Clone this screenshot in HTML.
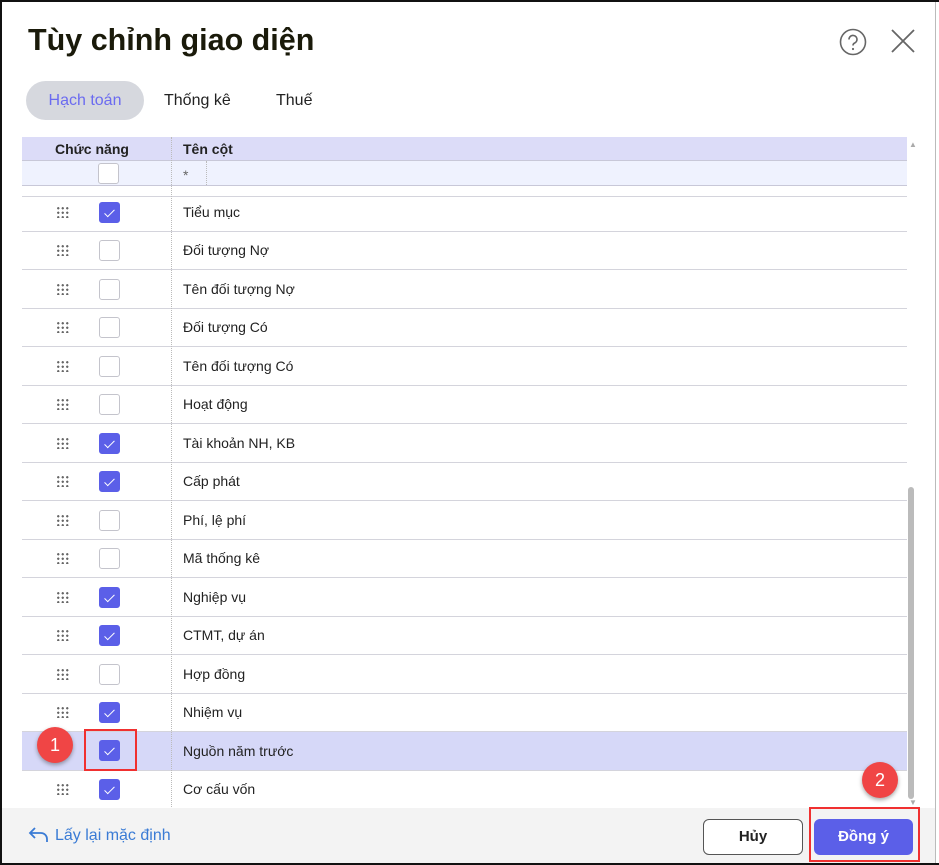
<!DOCTYPE html>
<html><head><meta charset="utf-8"><style>
*{box-sizing:border-box;margin:0;padding:0}
body{width:939px;height:865px;overflow:hidden;background:#fff;font-family:"Liberation Sans",Arial,sans-serif;position:relative}
.frame{position:absolute;left:0;top:0;width:939px;height:865px;border:2px solid #111;border-right:none}
.rline{position:absolute;left:935px;top:0;width:1px;height:865px;background:#bbb}
h1{position:absolute;left:28px;top:23px;font-size:30.5px;font-weight:bold;color:#1a1a0a}
.tab{position:absolute;top:81px;height:39px;line-height:39px;font-size:16px;color:#222}
.pill{left:26px;width:118px;background:#d6d8de;border-radius:20px;text-align:center;color:#6b6bf0}
.hdr{position:absolute;left:22px;top:137px;width:885px;height:24px;background:#dcdcf8;border-bottom:1px solid #c8c8d8}
.flt{position:absolute;left:22px;top:161px;width:885px;height:25px;background:#eff2fe;border-bottom:1px solid #c8c8d8}
.row{position:absolute;left:22px;width:885px;height:39px;border-bottom:1px solid #d4d4dc;font-size:14px;color:#222}
.row .t{position:absolute;left:161px;top:11px}
.cb{position:absolute;width:21px;height:21px;border:1px solid #c4c4cc;border-radius:3px;background:#fff}
.cb.on{background:#5b5fe8;border-color:#5b5fe8}
.cb.on::after{content:"";position:absolute;left:7px;top:4px;width:4px;height:9px;border:solid #fff;border-width:0 1.5px 1.5px 0;transform:rotate(45deg)}
.dots{position:absolute;left:34px;top:13px;width:14px;height:12px;background-image:radial-gradient(circle,#666 1px,transparent 1.3px);background-size:4.5px 4.5px}
.vdiv{position:absolute;left:171px;top:137px;width:0;height:672px;border-left:1px dotted #bbb}
.sel{background:#d6d8f8}
.foot{position:absolute;left:2px;top:808px;width:933px;height:57px;background:#f3f3f3}
.btn{position:absolute;top:819px;height:36px;border-radius:6px;font-size:15px;font-weight:bold;text-align:center;line-height:34px}
.badge{position:absolute;width:36px;height:36px;border-radius:50%;background:#f04545;color:#fff;font-size:18px;text-align:center;line-height:36px;box-shadow:0 2px 4px rgba(0,0,0,.35)}
.red{position:absolute;border:2px solid #f03030}
</style></head><body>
<h1>Tùy chỉnh giao diện</h1>
<svg style="position:absolute;left:838px;top:28px" width="30" height="30" viewBox="0 0 30 30"><circle cx="15" cy="14" r="12.5" fill="none" stroke="#666" stroke-width="1.6"/><path d="M11 11.5a4 4 0 1 1 5.5 3.6c-1 .5-1.5 1.2-1.5 2.4" fill="none" stroke="#666" stroke-width="1.6"/><circle cx="15" cy="21" r="1.1" fill="#666"/></svg>
<svg style="position:absolute;left:890px;top:28px" width="26" height="26" viewBox="0 0 26 26"><path d="M2 2L24 24M24 2L2 24" stroke="#666" stroke-width="1.8"/></svg>
<div class="tab pill">Hạch toán</div>
<div class="tab" style="left:164px">Thống kê</div>
<div class="tab" style="left:276px">Thuế</div>
<div class="hdr"><span style="position:absolute;left:33px;top:4px;font-size:14px;font-weight:bold;color:#222">Chức năng</span><span style="position:absolute;left:161px;top:4px;font-size:14px;font-weight:bold;color:#222">Tên cột</span></div>
<div class="flt"><div class="cb" style="left:76px;top:2px"></div><span style="position:absolute;left:161px;top:6px;color:#666;font-size:14px">*</span><div style="position:absolute;left:184px;top:0;height:24px;border-left:1px dotted #bbb"></div></div>
<div style="position:absolute;left:22px;top:196px;width:885px;border-top:1px solid #d4d4dc"></div>

<div class="row" style="top:193px"><div class="dots"></div><div class="cb on" style="left:77px;top:9px"></div><span class="t">Tiểu mục</span></div>
<div class="row" style="top:231px"><div class="dots"></div><div class="cb" style="left:77px;top:9px"></div><span class="t">Đối tượng Nợ</span></div>
<div class="row" style="top:270px"><div class="dots"></div><div class="cb" style="left:77px;top:9px"></div><span class="t">Tên đối tượng Nợ</span></div>
<div class="row" style="top:308px"><div class="dots"></div><div class="cb" style="left:77px;top:9px"></div><span class="t">Đối tượng Có</span></div>
<div class="row" style="top:347px"><div class="dots"></div><div class="cb" style="left:77px;top:9px"></div><span class="t">Tên đối tượng Có</span></div>
<div class="row" style="top:385px"><div class="dots"></div><div class="cb" style="left:77px;top:9px"></div><span class="t">Hoạt động</span></div>
<div class="row" style="top:424px"><div class="dots"></div><div class="cb on" style="left:77px;top:9px"></div><span class="t">Tài khoản NH, KB</span></div>
<div class="row" style="top:462px"><div class="dots"></div><div class="cb on" style="left:77px;top:9px"></div><span class="t">Cấp phát</span></div>
<div class="row" style="top:501px"><div class="dots"></div><div class="cb" style="left:77px;top:9px"></div><span class="t">Phí, lệ phí</span></div>
<div class="row" style="top:539px"><div class="dots"></div><div class="cb" style="left:77px;top:9px"></div><span class="t">Mã thống kê</span></div>
<div class="row" style="top:578px"><div class="dots"></div><div class="cb on" style="left:77px;top:9px"></div><span class="t">Nghiệp vụ</span></div>
<div class="row" style="top:616px"><div class="dots"></div><div class="cb on" style="left:77px;top:9px"></div><span class="t">CTMT, dự án</span></div>
<div class="row" style="top:655px"><div class="dots"></div><div class="cb" style="left:77px;top:9px"></div><span class="t">Hợp đồng</span></div>
<div class="row" style="top:693px"><div class="dots"></div><div class="cb on" style="left:77px;top:9px"></div><span class="t">Nhiệm vụ</span></div>
<div class="row sel" style="top:732px"><div class="cb on" style="left:77px;top:8px"></div><span class="t">Nguồn năm trước</span></div>
<div class="row" style="top:770px"><div class="dots"></div><div class="cb on" style="left:77px;top:9px"></div><span class="t">Cơ cấu vốn</span></div>
<div class="vdiv"></div>

<div style="position:absolute;left:909px;top:140px;color:#aaa;font-size:8px">▲</div>
<div style="position:absolute;left:908px;top:487px;width:6px;height:312px;background:#bbb;border-radius:3px"></div>
<div style="position:absolute;left:909px;top:798px;color:#aaa;font-size:8px">▼</div>

<div class="foot"></div>
<svg style="position:absolute;left:28px;top:826px" width="22" height="18" viewBox="0 0 22 18"><path d="M7 2L2 7L7 12M2 7H13a6 6 0 0 1 6 6v3" fill="none" stroke="#3a7bd5" stroke-width="1.8"/></svg>
<div style="position:absolute;left:55px;top:827px;font-size:16px;color:#3a7bd5">Lấy lại mặc định</div>
<div class="btn" style="left:703px;width:100px;background:#fff;border:1px solid #555;color:#222">Hủy</div>
<div class="btn" style="left:814px;width:99px;background:#5b5fe8;color:#fff;line-height:36px">Đồng ý</div>

<div class="red" style="left:84px;top:729px;width:53px;height:42px"></div>
<div class="badge" style="left:37px;top:727px">1</div>
<div class="red" style="left:809px;top:807px;width:111px;height:55px"></div>
<div class="badge" style="left:862px;top:762px">2</div>
<div class="rline"></div>
<div class="frame"></div>
</body></html>
